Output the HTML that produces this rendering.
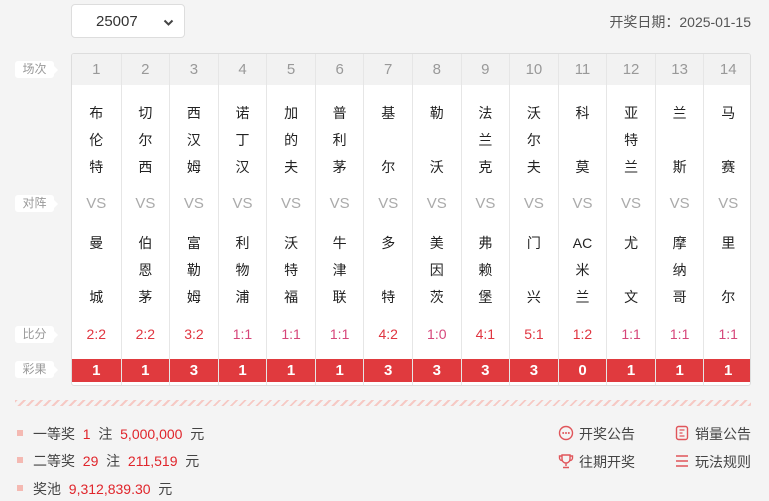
<!DOCTYPE html>
<html><head><meta charset="utf-8"><style>
*{margin:0;padding:0;box-sizing:border-box}
body{width:769px;height:501px;background:#f4f4f4;font-family:"Liberation Sans","Noto Sans CJK SC",sans-serif;position:relative;overflow:hidden;color:#333}
.sel{position:absolute;left:71px;top:4px;width:114px;height:34px;background:#fff;border:1px solid #ddd;border-radius:4px;font-size:15px;color:#333;line-height:33px;padding-left:24px}
.sel svg{position:absolute;right:10px;top:14px}
.date{position:absolute;right:18px;top:12px;font-size:14px;color:#555}
.tbl{position:absolute;left:71px;top:53px;width:680px;height:333px;background:#fff;border:1px solid #ddd;border-radius:3px;overflow:hidden}
.hd{position:absolute;left:0;top:0;width:100%;height:31px;background:#f2f2f2}
.col{position:absolute;top:0;height:333px;border-left:1px solid #e6e6e6}
.col:first-child{border-left:none}
.n{position:absolute;top:0;width:100%;height:31px;line-height:32px;text-align:center;color:#999;font-size:15px}
.t{position:absolute;width:100%;text-align:center;font-size:14px;color:#222;line-height:27px}
.vs{position:absolute;top:141px;width:100%;text-align:center;color:#aaa;font-size:15px}
.sc{position:absolute;top:272px;width:100%;text-align:center;font-size:14px;color:#e03540}
.sc.p{color:#d6467a}
.r{position:absolute;top:305px;width:100%;height:23px;line-height:23px;background:#e03a3e;color:#fff;text-align:center;font-weight:bold;font-size:15px}
.lb{position:absolute;left:15px;width:39px;height:17px;background:#fff;border-radius:3px;font-size:12px;color:#999;text-align:center;line-height:17px}
.lb:after{content:"";position:absolute;right:-4px;top:5px;border-left:4px solid #fff;border-top:4px solid transparent;border-bottom:4px solid transparent}
.stripe{position:absolute;left:15px;top:400px;width:736px;height:6px;background:repeating-linear-gradient(135deg,#f6c9c4 0 2px,transparent 2px 6px)}
.pz{position:absolute;left:17px;font-size:14px;color:#444}
.pz i{display:inline-block;width:6px;height:6px;background:#f4b9b2;margin-right:10px;vertical-align:middle;position:relative;top:-2px}
.pz b{font-weight:normal;color:#e0252b}
.lk{position:absolute;font-size:14px;color:#444}
.lk svg{position:absolute;left:-21px;top:1px}
</style></head><body>
<div class="sel">25007<svg width="11" height="8" viewBox="0 0 11 8"><path d="M1.5 1.5L5.5 5.5L9.5 1.5" stroke="#444" stroke-width="2" fill="none"/></svg></div>
<div class="date">开奖日期：2025-01-15</div>
<div class="lb" style="top:61px">场次</div>
<div class="lb" style="top:195px">对阵</div>
<div class="lb" style="top:326px">比分</div>
<div class="lb" style="top:361px">彩果</div>
<div class="tbl"><div class="hd"></div><div id="cols"></div></div>
<div class="stripe"></div>
<div class="pz" style="top:424px"><i></i>一等奖&nbsp; <b>1</b>&nbsp; 注&nbsp; <b>5,000,000</b>&nbsp; 元</div>
<div class="pz" style="top:451px"><i></i>二等奖&nbsp; <b>29</b>&nbsp; 注&nbsp; <b>211,519</b>&nbsp; 元</div>
<div class="pz" style="top:479px"><i></i>奖池&nbsp; <b>9,312,839.30</b>&nbsp; 元</div>
<div class="lk" style="left:579px;top:424px"><svg width="16" height="16" viewBox="0 0 16 16"><circle cx="8" cy="8" r="6.5" stroke="#e0555a" stroke-width="1.4" fill="none"/><circle cx="5.2" cy="8" r="1" fill="#e0555a"/><circle cx="8" cy="8" r="1" fill="#e0555a"/><circle cx="10.8" cy="8" r="1" fill="#e0555a"/></svg>开奖公告</div>
<div class="lk" style="left:695px;top:424px"><svg width="16" height="16" viewBox="0 0 16 16"><rect x="2.5" y="1.5" width="11" height="13" rx="2" stroke="#e0555a" stroke-width="1.4" fill="none"/><path d="M5.5 5h5M5.5 8h3M5.5 11h5" stroke="#e0555a" stroke-width="1.3"/></svg>销量公告</div>
<div class="lk" style="left:579px;top:452px"><svg width="16" height="16" viewBox="0 0 16 16"><path d="M4 2h8v4a4 4 0 0 1-8 0zM4 3H1.5v2a2.5 2.5 0 0 0 2.5 2.5M12 3h2.5v2A2.5 2.5 0 0 1 12 7.5M8 10v3M5 14.5h6" stroke="#e0555a" stroke-width="1.4" fill="none"/></svg>往期开奖</div>
<div class="lk" style="left:695px;top:452px"><svg width="16" height="16" viewBox="0 0 16 16"><path d="M2 3h12M2 8h12M2 13h12" stroke="#e0555a" stroke-width="1.5"/></svg>玩法规则</div>
<script>
var h=["布伦特","切尔西","西汉姆","诺丁汉","加的夫","普利茅","基尔","勒沃","法兰克","沃尔夫","科莫","亚特兰","兰斯","马赛"];
var a=["曼城","伯恩茅","富勒姆","利物浦","沃特福","牛津联","多特","美因茨","弗赖堡","门兴","AC|米|兰","尤文","摩纳哥","里尔"];
var s=["2:2","2:2","3:2","1:1","1:1","1:1","4:2","1:0","4:1","5:1","1:2","1:1","1:1","1:1"];
var r=[1,1,3,1,1,1,3,3,3,3,0,1,1,1];
function place(str,top){var c=str.indexOf("|")>=0?str.split("|"):str.split("");var o="";var pos=c.length==3?[0,27,54]:[0,54];c.forEach(function(x,i){o+='<div class="t" style="top:'+(top+pos[i])+'px">'+x+'</div>'});return o}
var html="",w=680/14;
for(var i=0;i<14;i++){html+='<div class="col" style="left:'+(i*w)+'px;width:'+w+'px"><div class="n">'+(i+1)+'</div>'+place(h[i],46)+'<div class="vs">VS</div>'+place(a[i],176)+'<div class="sc'+(s[i]=="1:1"||s[i]=="1:0"?" p":"")+'">'+s[i]+'</div><div class="r">'+r[i]+'</div></div>'}
document.getElementById("cols").innerHTML=html;
</script>
</body></html>
